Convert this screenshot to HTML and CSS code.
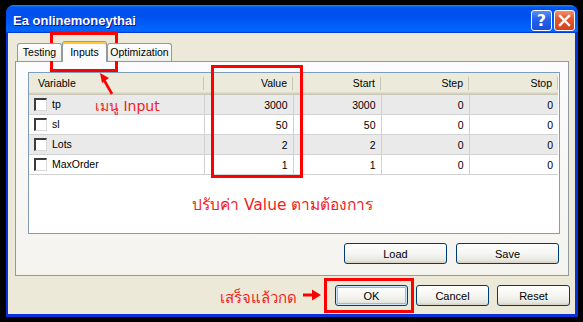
FILE: index.html
```html
<!DOCTYPE html>
<html lang="th">
<head>
    <meta charset="UTF-8">
    <meta name="viewport" content="width=device-width, initial-scale=1.0">
    <title>Ea onlinemoneythai</title>
    <link rel="stylesheet" href="styles.css">
</head>
<body>
    <div class="screen">
        <div class="window">
            <div class="titlebar">
                <span class="title">Ea onlinemoneythai</span>
                <div class="caption-buttons">
                    <span class="cap-btn help">?</span>
                    <span class="cap-btn close">
                        <svg width="13" height="13" viewBox="0 0 13 13">
                            <path d="M2 2 L11 11 M11 2 L2 11" stroke="#fff" stroke-width="2.4" stroke-linecap="square"/>
                        </svg>
                    </span>
                </div>
            </div>
            <div class="client">
                <div class="tabs">
                    <div class="tab tab-testing">Testing</div>
                    <div class="tab tab-inputs active">Inputs</div>
                    <div class="tab tab-optim">Optimization</div>
                </div>
                <div class="panel">
                    <div class="grid">
                        <table class="inputs-table">
                            <colgroup>
                                <col class="c-var">
                                <col class="c-num">
                                <col class="c-num2">
                                <col class="c-num2">
                                <col class="c-num">
                            </colgroup>
                            <thead>
                                <tr>
                                    <th class="left">Variable</th>
                                    <th>Value</th>
                                    <th>Start</th>
                                    <th>Step</th>
                                    <th>Stop</th>
                                </tr>
                            </thead>
                            <tbody>
                                <tr class="alt">
                                    <td class="left"><span class="check"></span>tp</td>
                                    <td>3000</td><td>3000</td><td>0</td><td>0</td>
                                </tr>
                                <tr>
                                    <td class="left"><span class="check"></span>sl</td>
                                    <td>50</td><td>50</td><td>0</td><td>0</td>
                                </tr>
                                <tr class="alt">
                                    <td class="left"><span class="check"></span>Lots</td>
                                    <td>2</td><td>2</td><td>0</td><td>0</td>
                                </tr>
                                <tr>
                                    <td class="left"><span class="check"></span>MaxOrder</td>
                                    <td>1</td><td>1</td><td>0</td><td>0</td>
                                </tr>
                            </tbody>
                        </table>
                    </div>
                    <div class="panel-buttons">
                        <button class="btn btn-wide">Load</button>
                        <button class="btn btn-wide">Save</button>
                    </div>
                </div>
                <div class="dialog-buttons">
                    <button class="btn default">OK</button>
                    <button class="btn">Cancel</button>
                    <button class="btn">Reset</button>
                </div>
            </div>
        </div>

        <!-- red annotations drawn over the dialog -->
        <div class="mark mark-tab"></div>
        <div class="mark mark-value"></div>
        <div class="mark mark-ok"></div>
        <svg class="arrow arrow-tab" width="20" height="24" viewBox="0 0 20 24">
            <path d="M14 22 L6 8" stroke="#f00" stroke-width="2.6"/>
            <path d="M2 1 L11 6 L4 11 Z" fill="#f00"/>
        </svg>
        <svg class="arrow arrow-ok" width="20" height="12" viewBox="0 0 20 12">
            <path d="M1 6 L12 6" stroke="#f00" stroke-width="3"/>
            <path d="M10 0.5 L19 6 L10 11.5 Z" fill="#f00"/>
        </svg>
        <span class="note note-menu">เมนู Input</span>
        <span class="note note-value">ปรับค่า Value ตามต้องการ</span>
        <span class="note note-ok">เสร็จแล้วกด</span>
    </div>
</body>
</html>
```

FILE: styles.css
```css
body {
    margin: 0;
    background: #000;
    font-family: "Liberation Sans", Arial, sans-serif;
    font-size: 10.5px;
    color: #000;
}
.screen {
    position: relative;
    width: 583px;
    height: 322px;
    padding: 5px 0 0 6px;
    box-sizing: border-box;
    overflow: hidden;
}
.window {
    width: 572px;
    height: 312px;
    background: #0831d9;
    border-radius: 8px 8px 0 0;
    display: flex;
    flex-direction: column;
    overflow: hidden;
}

/* title bar */
.titlebar {
    height: 28px;
    flex: none;
    display: flex;
    align-items: center;
    justify-content: space-between;
    padding: 0 3px 0 7px;
    background: linear-gradient(180deg, #0997ff, #0053ee 8%, #0050ee 40%, #0066ff 88%, #0066ff 93%, #005bff 95%, #003dd7 96%, #003dd7);
}
.title {
    color: #fff;
    font-weight: bold;
    font-size: 13px;
    padding-top: 2px;
    text-shadow: 1px 1px #0f1089;
}
.caption-buttons {
    display: flex;
    gap: 2px;
    padding-top: 2px;
}
.cap-btn {
    width: 21px;
    height: 21px;
    box-sizing: border-box;
    border: 1px solid #fff;
    border-radius: 3px;
    display: flex;
    align-items: center;
    justify-content: center;
    color: #fff;
}
.help {
    background: linear-gradient(180deg, #5b8ef7, #2663e8 40%, #1a4fdc);
    font-family: "DejaVu Sans", sans-serif;
    font-weight: bold;
    font-size: 16px;
}
.close {
    background: linear-gradient(180deg, #f0906e, #e2572f 40%, #d4431d);
}

/* client area */
.client {
    flex: 1;
    margin: 0 3px 3px 2px;
    background: #ece9d8;
    padding: 8px 6px 0 7px;
}
.tabs {
    display: flex;
    height: 21px;
    margin-left: 2px;
    margin-bottom: -1px;
    position: relative;
    z-index: 1;
}
.tab {
    box-sizing: border-box;
    height: 18px;
    margin-top: 2px;
    border: 1px solid #919b9c;
    border-bottom: none;
    border-radius: 3px 3px 0 0;
    background: linear-gradient(180deg, #fff, #fafaf9 26%, #f0f0ea 95%, #ecebe5);
    text-align: center;
    line-height: 17px;
}
.tab-testing { width: 45px; }
.tab-inputs { width: 45px; }
.tab-optim { width: 65px; }
.tab.active {
    height: 21px;
    margin-top: 0;
    background: #fcfcfe;
    border-top: 1px solid #e68b2c;
    box-shadow: inset 0 2px #ffc83c;
    line-height: 19px;
    padding-top: 1px;
}
.panel {
    border: 1px solid #919b9c;
    background: linear-gradient(180deg, #fcfcfe, #f4f3ee);
    padding: 10px 8px 11px 12px;
}

/* list view */
.grid {
    height: 162px;
    box-sizing: border-box;
    border: 1px solid #7f9db9;
    background: #fff;
}
.inputs-table {
    width: 529px;
    table-layout: fixed;
    border-collapse: collapse;
}
.c-var { width: 175px; }
.c-num { width: 89px; }
.c-num2 { width: 88px; }
.inputs-table th {
    height: 20px;
    padding: 0 6px 2px 6px;
    font-weight: normal;
    text-align: right;
    background: #ebeadb;
    box-shadow: inset 0 -1px #cbc7b8, inset 0 -2px #d6d2c2, inset 0 -3px #e2decd;
    position: relative;
}
.inputs-table th::after {
    content: "";
    position: absolute;
    right: 0;
    top: 4px;
    bottom: 5px;
    width: 1px;
    background: #c7c5b2;
    box-shadow: 1px 0 #fff;
}
.inputs-table th.left {
    text-align: left;
    padding-left: 9px;
}
.inputs-table td {
    height: 19px;
    padding: 0 5px 0 4px;
    text-align: right;
    border: 1px solid #d2d2d2;
    border-top: none;
}
.inputs-table td:first-child { border-left: none; }
.inputs-table td:last-child { border-right: none; }
.inputs-table td.left {
    text-align: left;
    padding-left: 5px;
}
.inputs-table tr.alt td {
    background: #eaeaea;
}
.check {
    display: inline-block;
    width: 13px;
    height: 13px;
    box-sizing: border-box;
    vertical-align: -3px;
    margin-right: 5px;
    background: #fff;
    border-top: 2px solid #3c3c3c;
    border-left: 2px solid #3c3c3c;
    border-right: 1px solid #d8d8d8;
    border-bottom: 1px solid #d8d8d8;
}

/* buttons */
.panel-buttons,
.dialog-buttons {
    display: flex;
    justify-content: flex-end;
}
.panel-buttons {
    gap: 9px;
    margin-top: 9px;
    padding-right: 1px;
}
.dialog-buttons {
    gap: 8px;
    margin-top: 9px;
    margin-right: -1px;
}
.btn {
    width: 73px;
    height: 21px;
    padding: 0;
    font-family: "Liberation Sans", Arial, sans-serif;
    font-size: 11px;
    color: #000;
    border: 1px solid #003c74;
    border-radius: 3px;
    background: linear-gradient(180deg, #fff, #f4f4f0 55%, #e8e8e1 85%, #d6d0c5);
}
.btn-wide { width: 103px; }
.btn.default {
    box-shadow: inset 0 0 0 1px #cee7ff, inset 0 0 0 2px #98b8ea;
}

/* annotations */
.mark {
    position: absolute;
    border: 3px solid #f00;
    box-sizing: border-box;
}
.mark-tab { left: 50px; top: 32px; width: 68px; height: 40px; }
.mark-value { left: 211px; top: 65px; width: 92px; height: 113px; }
.mark-ok { left: 324px; top: 278px; width: 90px; height: 35px; }
.arrow { position: absolute; }
.arrow-tab { left: 98px; top: 72px; }
.arrow-ok { left: 302px; top: 289px; }
.note {
    position: absolute;
    color: #f21d1d;
    font-family: "DejaVu Sans", sans-serif;
    white-space: nowrap;
}
.note-menu { left: 95px; top: 95px; font-size: 14px; }
.note-value { left: 192px; top: 192px; font-size: 15.5px; }
.note-ok { left: 220px; top: 286px; font-size: 15px; }
```
